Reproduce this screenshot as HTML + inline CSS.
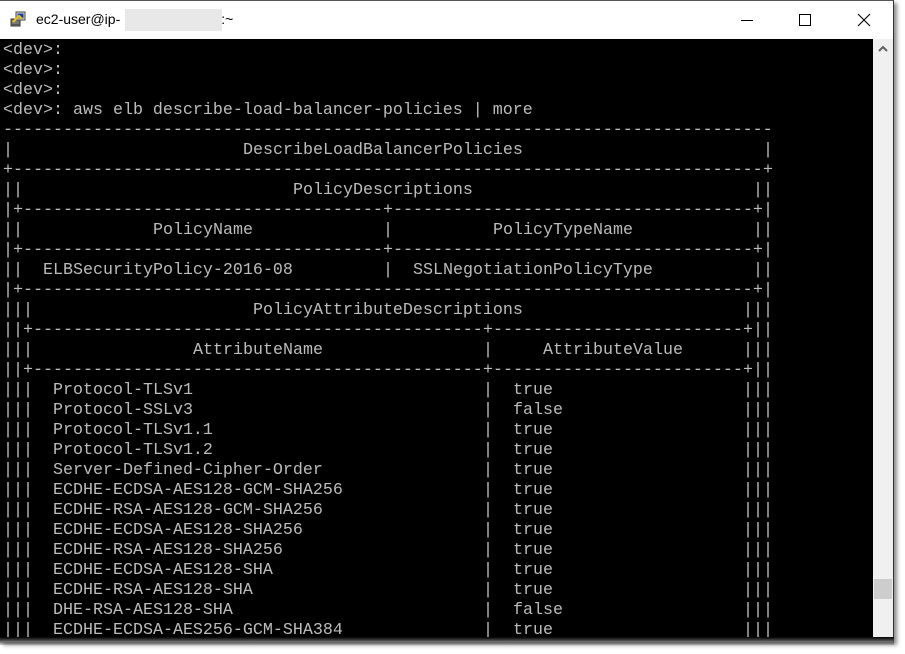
<!DOCTYPE html>
<html><head><meta charset="utf-8"><style>
*{margin:0;padding:0;box-sizing:border-box}
body{width:905px;height:654px;background:#fff;position:relative;overflow:hidden;font-family:"Liberation Sans",sans-serif}
#win{position:absolute;left:0;top:0;width:894px;height:642px;border-top:1px solid #555;border-right:1px solid #333;box-shadow:3px 3px 4px rgba(0,0,0,.45)}
#title{position:absolute;left:0;top:0;width:893px;height:38px;background:#fff}
#title .t{position:absolute;left:36px;top:10px;font-size:14px;color:#000}
#blur{position:absolute;left:125px;top:8px;width:97px;height:22px;background:#e8e8e8}
#term{position:absolute;left:0;top:38px;width:873px;height:600px;background:#000;overflow:hidden}
#sb{position:absolute;left:873px;top:38px;width:20px;height:600px;background:#f0f0f0}
#thumb{position:absolute;left:1px;top:540px;width:18px;height:20px;background:#cdcdcd}
.ln{position:absolute;left:3px;height:20px;width:870px;font-family:"Liberation Mono",monospace;font-size:16.667px;line-height:20px;color:#bcbcbc;white-space:pre}
.ln span{position:absolute;top:0;overflow:hidden;white-space:pre}
#tear{position:absolute;left:0;top:636px;width:894px;height:8px;background:linear-gradient(#000,#444 40%,rgba(120,120,120,.3));}
</style></head><body>
<div id="win">
<div id="title">
<svg style="position:absolute;left:10px;top:9px" width="18" height="18" viewBox="0 0 18 18"><rect x="1" y="9" width="9" height="7" fill="#777" stroke="#333" stroke-width="1"/><rect x="6" y="2" width="9" height="8" fill="#ddd" stroke="#444"/><rect x="7.5" y="3.5" width="6" height="5" fill="#1a3fa0"/><path d="M3 12 L9 6 L12 9" stroke="#e8c020" stroke-width="2.2" fill="none"/><rect x="2" y="14" width="7" height="2" fill="#555"/></svg>
<div id="blur"></div>
<div class="t">ec2-user@ip-<span style="display:inline-block;width:101px"></span>:~</div>
<svg style="position:absolute;left:735px;top:10px" width="150" height="20" viewBox="0 0 150 20"><line x1="6" y1="9.5" x2="18" y2="9.5" stroke="#000"/><rect x="64.5" y="3.5" width="11" height="11" fill="none" stroke="#000"/><path d="M123 3 L135 15 M135 3 L123 15" stroke="#000" stroke-width="1.1"/></svg>
</div>
<div id="term"></div>
<div id="sb"><svg style="position:absolute;left:5px;top:6px" width="10" height="8"><path d="M1 6 L5 2 L9 6" stroke="#606060" stroke-width="2" fill="none"/></svg><div id="thumb"></div></div>
<div id="tear"></div>
</div>
<script>
var D=new Array(120).join('-');
var out='';
function seg(i,s){return '<span style="left:'+(i*10)+'px">'+s+'</span>';}
function dash(i,n){return seg(i,D.substr(0,n));}
var L=[];
L.push(seg(0,'&lt;dev&gt;:'));L.push(seg(0,'&lt;dev&gt;:'));L.push(seg(0,'&lt;dev&gt;:'));
L.push(seg(0,'&lt;dev&gt;: aws elb describe-load-balancer-policies | more'));
L.push(dash(0,77));
L.push(seg(0,'|')+seg(24,'DescribeLoadBalancerPolicies')+seg(76,'|'));
L.push(seg(0,'+')+dash(1,75)+seg(76,'+'));
L.push(seg(0,'||')+seg(29,'PolicyDescriptions')+seg(75,'||'));
var E=seg(0,'|+')+dash(2,36)+seg(38,'+')+dash(39,36)+seg(75,'+|');
L.push(E);
L.push(seg(0,'||')+seg(15,'PolicyName')+seg(38,'|')+seg(49,'PolicyTypeName')+seg(75,'||'));
L.push(E);
L.push(seg(0,'||')+seg(4,'ELBSecurityPolicy-2016-08')+seg(38,'|')+seg(41,'SSLNegotiationPolicyType')+seg(75,'||'));
L.push(seg(0,'|+')+dash(2,73)+seg(75,'+|'));
L.push(seg(0,'|||')+seg(25,'PolicyAttributeDescriptions')+seg(74,'|||'));
var K=seg(0,'||+')+dash(3,45)+seg(48,'+')+dash(49,25)+seg(74,'+||');
L.push(K);
L.push(seg(0,'|||')+seg(19,'AttributeName')+seg(48,'|')+seg(54,'AttributeValue')+seg(74,'|||'));
L.push(K);
var R=[['Protocol-TLSv1','true'],['Protocol-SSLv3','false'],['Protocol-TLSv1.1','true'],['Protocol-TLSv1.2','true'],['Server-Defined-Cipher-Order','true'],['ECDHE-ECDSA-AES128-GCM-SHA256','true'],['ECDHE-RSA-AES128-GCM-SHA256','true'],['ECDHE-ECDSA-AES128-SHA256','true'],['ECDHE-RSA-AES128-SHA256','true'],['ECDHE-ECDSA-AES128-SHA','true'],['ECDHE-RSA-AES128-SHA','true'],['DHE-RSA-AES128-SHA','false'],['ECDHE-ECDSA-AES256-GCM-SHA384','true']];
R.forEach(function(r){L.push(seg(0,'|||')+seg(5,r[0])+seg(48,'|')+seg(51,r[1])+seg(74,'|||'));});
L.forEach(function(h,i){out+='<div class="ln" style="top:'+(2+i*20)+'px">'+h+'</div>';});
document.getElementById('term').innerHTML=out;
</script>
</body></html>
